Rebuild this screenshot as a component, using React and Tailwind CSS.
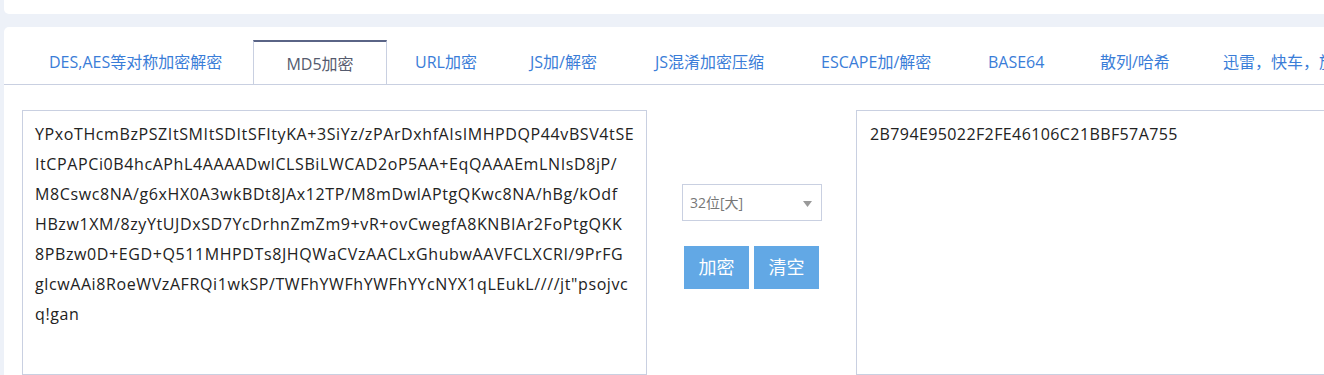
import React, { useState } from 'react'

const tabs = [
  { label: 'DES,AES等对称加密解密', w: 'w-[249px] pl-[45px]' },
  { label: 'MD5加密', w: 'w-[134px] justify-center', active: true },
  { label: 'URL加密', w: 'w-[115px] pl-[28px]' },
  { label: 'JS加/解密', w: 'w-[125px] pl-[28px]' },
  { label: 'JS混淆加密压缩', w: 'w-[166px] pl-[28px]' },
  { label: 'ESCAPE加/解密', w: 'w-[167px] pl-[28px]' },
  { label: 'BASE64', w: 'w-[112px] pl-[28px]' },
  { label: '散列/哈希', w: 'w-[123px] pl-[28px]' },
  { label: '迅雷，快车，旋风URL加/解密', w: 'w-[260px] pl-[28px]' },
]

const source = [
  'YPxoTHcmBzPSZItSMItSDItSFItyKA+3SiYz/zPArDxhfAIsIMHPDQP44vBSV4tSE',
  'ItCPAPCi0B4hcAPhL4AAAADwlCLSBiLWCAD2oP5AA+EqQAAAEmLNIsD8jP/',
  'M8Cswc8NA/g6xHX0A3wkBDt8JAx12TP/M8mDwlAPtgQKwc8NA/hBg/kOdf',
  'HBzw1XM/8zyYtUJDxSD7YcDrhnZmZm9+vR+ovCwegfA8KNBIAr2FoPtgQKK',
  '8PBzw0D+EGD+Q511MHPDTs8JHQWaCVzAACLxGhubwAAVFCLXCRI/9PrFG',
  'glcwAAi8RoeWVzAFRQi1wkSP/TWFhYWFhYWFhYYcNYX1qLEukL////jt"psojvc',
  'q!gan',
]

const font = { fontFamily: '"Open Sans", "Noto Sans CJK SC", sans-serif' }

export default function App() {
  const [mode, setMode] = useState('32u')
  return (
    <div className="h-[375px] overflow-hidden bg-[#edf1f8] pl-1" style={font}>
      {/* top strip */}
      <div className="h-[14px] bg-white rounded-bl-[5px]" />

      <div className="mt-[13px] bg-white rounded-tl-[5px] pt-[13px] h-[400px]">
        {/* tabs */}
        <div className="flex h-[45px] border-b border-[#c9d0e1] whitespace-nowrap overflow-hidden">
          {tabs.map((t) => (
            <div
              key={t.label}
              className={
                'flex shrink-0 items-center text-[16px] ' + t.w + ' ' +
                (t.active
                  ? 'border-x border-[#c9d0e1] border-t-2 border-t-[#5a6486] bg-white -mb-px text-[#555b6e]'
                  : 'text-[#3a7dd8]')
              }
            >
              {t.label}
            </div>
          ))}
        </div>

        {/* body */}
        <div className="flex pt-[25px] pl-[18px]">
          <div className="w-[625px] h-[265px] shrink-0 border border-[#c9d0e1] pl-[12px] pt-[8px] text-[16px] tracking-[0.6px] leading-[30px] text-[#222]">
            {source.map((l, i) => (
              <div key={i} className="whitespace-nowrap">{l}</div>
            ))}
          </div>

          <div className="w-[209px] shrink-0 pl-[35px] pt-[74px]">
            <div className="relative w-[140px] h-[37px] border border-[#c9d0e1] flex items-center pl-[7px] text-[14px] text-[#777]">
              <select
                value={mode}
                onChange={(e) => setMode(e.target.value)}
                className="absolute inset-0 opacity-0"
              >
                <option value="32u">32位[大]</option>
                <option value="32l">32位[小]</option>
                <option value="16u">16位[大]</option>
                <option value="16l">16位[小]</option>
              </select>
              <span>32位[大]</span>
              <svg className="absolute right-[9px] top-[16px]" width="9" height="6" viewBox="0 0 9 6">
                <path d="M0 0h9L4.5 6z" fill="#999" />
              </svg>
            </div>
            <div className="flex gap-[5px] mt-[25px] pl-[2px]">
              <button className="w-[65px] h-[43px] bg-[#62a8e5] text-white text-[18px]">加密</button>
              <button className="w-[65px] h-[43px] bg-[#62a8e5] text-white text-[18px]">清空</button>
            </div>
          </div>

          <div className="w-[625px] h-[265px] shrink-0 border border-[#c9d0e1] pl-[13px] pt-[8px] text-[16px] tracking-[0.4px] leading-[30px] text-[#222]">
            2B794E95022F2FE46106C21BBF57A755
          </div>
        </div>
      </div>
    </div>
  )
}
